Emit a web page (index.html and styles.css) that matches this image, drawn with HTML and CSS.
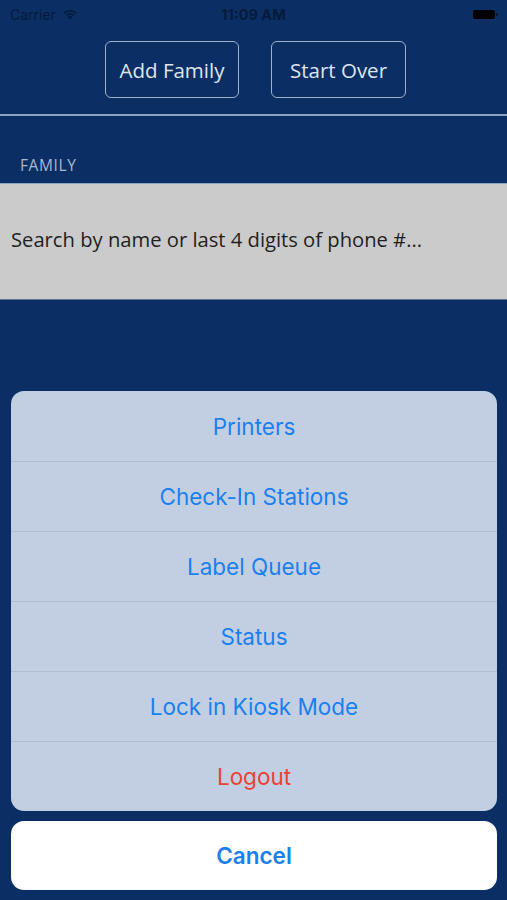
FILE: index.html
```html
<!DOCTYPE html>
<html lang="en">
<head>
    <meta charset="UTF-8">
    <meta name="viewport" content="width=device-width, initial-scale=1.0">
    <title>Check-In</title>
    <link rel="stylesheet" href="styles.css">
</head>
<body>
    <div class="statusbar">
        <div class="carrier">
            Carrier
            <svg class="wifi" width="16" height="12" viewBox="0 0 16 12">
                <path d="M8 11.5 L5.6 8.9 A3.5 3.5 0 0 1 10.4 8.9 Z" fill="#061a3d"/>
                <path d="M3.6 6.8 A6.3 6.3 0 0 1 12.4 6.8 L11.2 8.1 A4.6 4.6 0 0 0 4.8 8.1 Z" fill="#061a3d"/>
                <path d="M1.4 4.5 A9.4 9.4 0 0 1 14.6 4.5 L13.4 5.8 A7.6 7.6 0 0 0 2.6 5.8 Z" fill="#061a3d"/>
            </svg>
        </div>
        <div class="time">11:09 AM</div>
        <div class="battery"><span></span></div>
    </div>

    <div class="actions">
        <button class="outline-btn">Add Family</button>
        <button class="outline-btn">Start Over</button>
    </div>
    <div class="rule"></div>

    <div class="section-label">FAMILY</div>
    <div class="search">Search by name or last 4 digits of phone #...</div>

    <!-- action sheet -->
    <div class="sheet">
        <div class="sheet-group">
            <div class="sheet-item">Printers</div>
            <div class="sheet-item">Check-In Stations</div>
            <div class="sheet-item">Label Queue</div>
            <div class="sheet-item">Status</div>
            <div class="sheet-item">Lock in Kiosk Mode</div>
            <div class="sheet-item danger">Logout</div>
        </div>
        <div class="sheet-cancel">Cancel</div>
    </div>
</body>
</html>
```

FILE: styles.css
```css
body {
    margin: 0;
    padding: 0;
    width: 507px;
    height: 900px;
    background-color: #0b2f64;
    font-family: Inter, Roboto, "Liberation Sans", sans-serif;
    overflow: hidden;
}
.statusbar {
    height: 28px;
    display: flex;
    align-items: center;
    justify-content: space-between;
    padding: 0 10px;
    color: #061a3d;
    font-size: 14px;
    position: relative;
}
.carrier {
    display: flex;
    align-items: center;
    gap: 6px;
}
.time {
    position: absolute;
    left: 0;
    right: 0;
    text-align: center;
    font-weight: bold;
    font-size: 14.5px;
}
.battery {
    width: 22px;
    height: 9px;
    background-color: #000;
    border-radius: 2px;
    margin-right: 2px;
    position: relative;
}
.battery span {
    position: absolute;
    right: -3px;
    top: 3px;
    width: 2px;
    height: 3px;
    background-color: #061a3d;
}
.actions {
    display: flex;
    justify-content: center;
    gap: 32px;
    padding-top: 13px;
    padding-left: 4px;
}
.outline-btn {
    height: 57px;
    padding: 0;
    background: transparent;
    border: 1.5px solid #9fb0ca;
    border-radius: 6px;
    color: #dfe5ef;
    font-family: "Open Sans", Lato, sans-serif;
    font-size: 20.5px;
}
.outline-btn:first-child {
    width: 134px;
}
.outline-btn:last-child {
    width: 135px;
}
.rule {
    height: 2px;
    background-color: #8ea3c2;
    margin-top: 16px;
}
.section-label {
    color: #a9b8d0;
    font-family: "Open Sans", Lato, sans-serif;
    font-size: 15.5px;
    letter-spacing: 0.6px;
    padding: 38px 0 0 20px;
    height: 29px;
}
.search {
    height: 117px;
    border-top: 1px solid #8ea3c2;
    background-color: #cbcbcb;
    color: #1f1f1f;
    font-family: "Open Sans", Lato, sans-serif;
    font-size: 20.2px;
    display: flex;
    align-items: center;
    padding-left: 11px;
    padding-bottom: 6px;
    box-sizing: border-box;
    border-bottom: 1px solid #5d7396;
}
.sheet {
    margin: 91px 10px 0 11px;
    display: flex;
    flex-direction: column;
    gap: 10px;
}
.sheet-group {
    background-color: #c2cfe3;
    border-radius: 13px;
    overflow: hidden;
}
.sheet-item {
    height: 70px;
    display: flex;
    align-items: center;
    justify-content: center;
    color: #1b7ff0;
    font-size: 22.5px;
    border-top: 1px solid #aebdd3;
    box-sizing: border-box;
}
.sheet-item:first-child {
    border-top: none;
}
.sheet-item.danger {
    color: #ea4238;
}
.sheet-cancel {
    height: 69px;
    background-color: #fff;
    border-radius: 13px;
    display: flex;
    align-items: center;
    justify-content: center;
    color: #1b7ff0;
    font-size: 22.5px;
    font-weight: 600;
}
```
